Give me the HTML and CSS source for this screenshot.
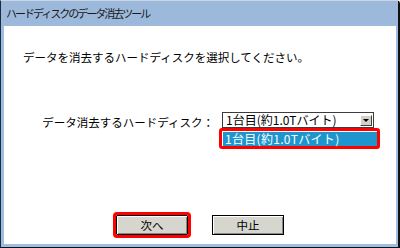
FILE: index.html
```html
<!DOCTYPE html>
<html lang="ja">
<head>
<meta charset="utf-8">
<title>ハードディスクのデータ消去ツール</title>
<link rel="stylesheet" href="styles.css">
</head>
<body>
<div class="window">
  <div class="titlebar">ハードディスクのデータ消去ツール</div>
  <div class="client">
    <p class="prompt">データを消去するハードディスクを選択してください。</p>
    <div class="row">
      <span class="label">データ消去するハードディスク：</span>
      <div class="select">
        <span class="value">1台目(約1.0Tバイト)</span>
        <span class="arrow"><svg width="10" height="9" viewBox="0 0 10 9"><path d="M2 3h6l-3 3z" fill="#000"/></svg></span>
        <div class="list"><div class="option">1台目(約1.0Tバイト)</div></div>
      </div>
    </div>
    <div class="buttons">
      <button class="btn primary">次へ</button>
      <button class="btn">中止</button>
    </div>
  </div>
</div>
</body>
</html>
```
FILE: styles.css
```css
html, body {
  margin: 0;
  padding: 0;
  background: #fff;
}
body {
  font-family: "Noto Sans CJK JP", "Noto Sans", sans-serif;
  color: #000;
}
.window {
  width: 400px;
  height: 248px;
  box-sizing: border-box;
  display: flex;
  flex-direction: column;
  border-top: 1px solid #c8d6e8;
  border-left: 1px solid #1c2a3a;
  border-right: 2px solid #111;
  border-bottom: 1px solid #111;
  border-top-right-radius: 4px;
  background: #9dbde2;
  padding: 0 2px 3px 3px;
}
.titlebar {
  height: 25px;
  line-height: 25px;
  font-size: 11px;
  letter-spacing: -2px;
  color: #1a1a1a;
  background: #9cb9dc;
  margin: 0 -2px 0 -3px;
  padding-left: 5px;
}
.client {
  flex: 1;
  background: #fff;
  display: flex;
  flex-direction: column;
}
.prompt {
  margin: 23px 0 0 19px;
  font-size: 11.5px;
  line-height: 16px;
}
.row {
  display: flex;
  justify-content: flex-end;
  align-items: flex-start;
  margin-top: 47px;
  padding-right: 22px;
}
.label {
  margin-right: 8px;
  margin-top: 2px;
  font-size: 11.5px;
  line-height: 16px;
}
.select {
  position: relative;
  width: 152px;
  height: 16px;
  box-sizing: border-box;
  border: 1px solid #3c3c3c;
  background: #fff;
  display: flex;
  align-items: center;
}
.value {
  flex: 1;
  padding-left: 3px;
  font-size: 12px;
  line-height: 14px;
  white-space: nowrap;
}
.arrow {
  width: 12px;
  height: 11px;
  box-sizing: border-box;
  margin-right: 1px;
  background: #d4d0c8;
  border: 1px solid;
  border-color: #fff #404040 #404040 #fff;
  display: flex;
  align-items: center;
  justify-content: center;
}
.arrow svg {
  display: block;
}
.list {
  position: absolute;
  left: -4px;
  top: 15px;
  width: 161px;
  box-sizing: border-box;
  border: 3px solid #f00;
  border-radius: 3px;
  padding: 1px 0 0 1px;
  background: #fff;
}
.option {
  height: 14px;
  line-height: 14px;
  padding-left: 2px;
  background: #1e96cd;
  color: #fff;
  font-size: 12px;
  letter-spacing: 0.3px;
  white-space: nowrap;
}
.buttons {
  display: flex;
  justify-content: center;
  gap: 24px;
  margin-top: 85px;
}
.btn {
  width: 72px;
  height: 20px;
  box-sizing: border-box;
  margin: 0;
  padding: 0;
  border: 1px solid #000;
  background: #d6d6ce;
  box-shadow: inset 1px 1px #fff, inset -1px -1px #888;
  font-family: inherit;
  font-size: 11.5px;
  line-height: 16px;
  color: #000;
}
.btn.primary {
  border-radius: 1px;
  outline: 3px solid #f00;
  outline-offset: 0;
}
```
